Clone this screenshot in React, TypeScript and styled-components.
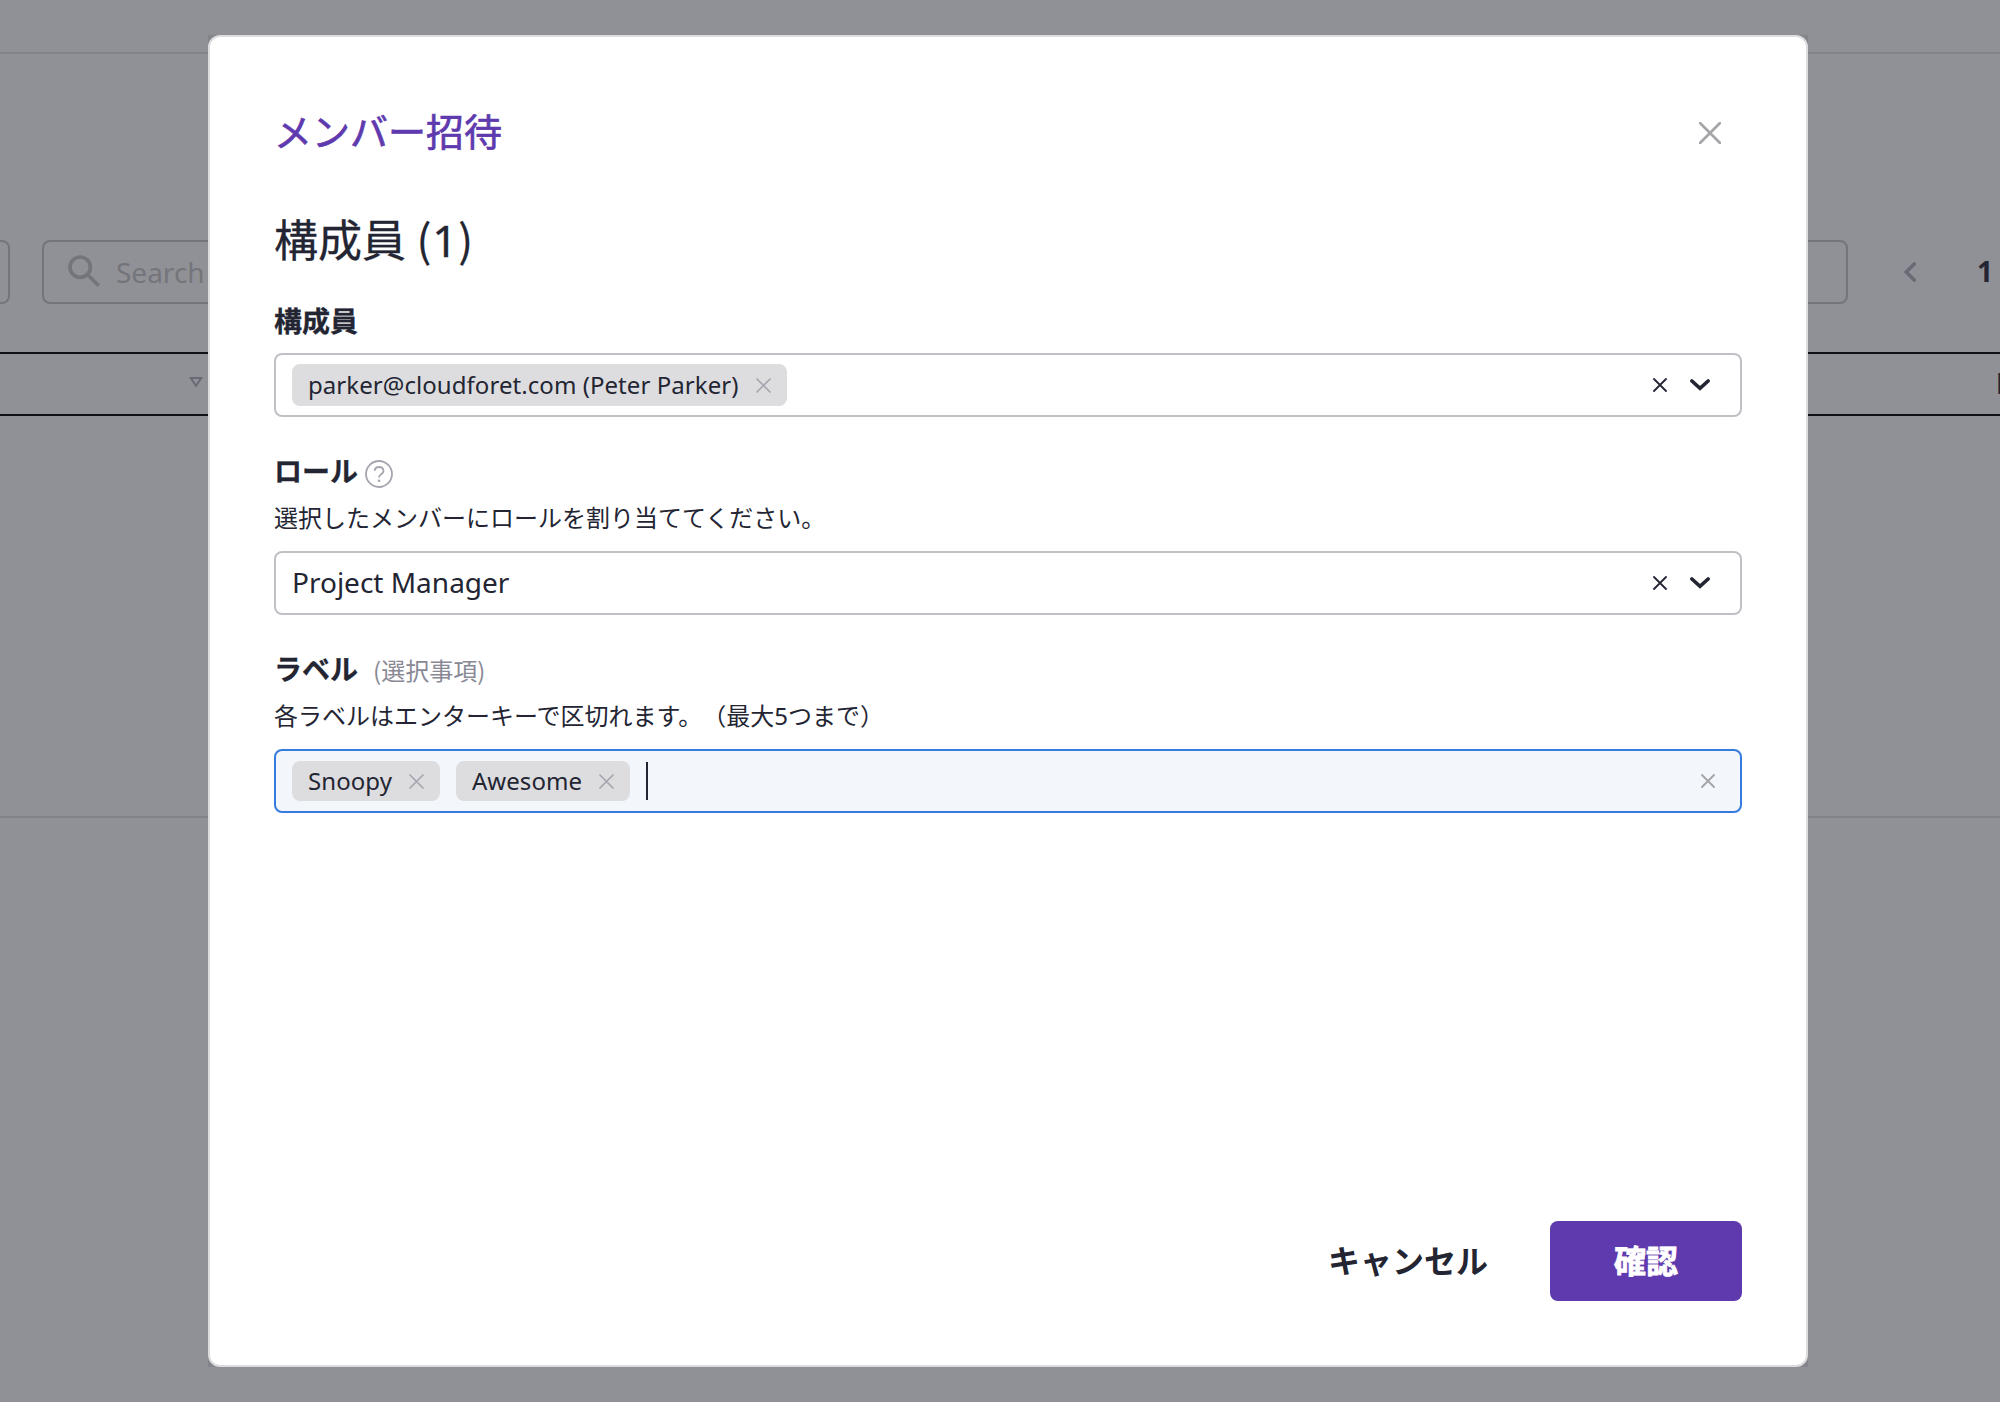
import React from 'react';
import styled, { createGlobalStyle } from 'styled-components';

const GlobalStyle = createGlobalStyle`
  *, *::before, *::after { box-sizing: border-box; }
  body {
    margin: 0;
    overflow: hidden;
    background: #909196;
    color: #232533;
    font-family: "Noto Sans", "Noto Sans CJK JP", sans-serif;
    text-spacing-trim: space-all;
  }
  button { font: inherit; color: inherit; border: 0; background: none; padding: 0; }
  svg { display: block; flex: none; }
`;

const Page = styled.div`
  width: 2000px;
  height: 1402px;
  display: flex;
  flex-direction: column;
  overflow: hidden;
`;

const TopBar = styled.header`
  height: 54px;
  flex: none;
  border-bottom: 2px solid #828388;
`;

const Panel = styled.section`
  height: 764px;
  flex: none;
  padding-top: 186px;
  border-bottom: 2px solid #828388;
`;

const Toolbar = styled.div`
  display: flex;
  align-items: center;
  height: 64px;
`;

const ToolBox = styled.div`
  width: 10px;
  height: 64px;
  border: 2px solid #74757b;
  border-left: 0;
  border-radius: 0 8px 8px 0;
`;

const SearchBox = styled.div`
  display: flex;
  align-items: center;
  width: 1806px;
  height: 64px;
  margin-left: 32px;
  padding: 0 0 1px 24px;
  gap: 15px;
  border: 2px solid #74757b;
  border-radius: 8px;
  color: #74757b;
  font-size: 28px;
`;

const PagePrev = styled.div`
  margin-left: 56px;
  color: #696a75;
`;

const PageNumber = styled.div`
  margin: 0 0 2px 61px;
  font-size: 28px;
  font-weight: 700;
`;

const TableHead = styled.div`
  display: flex;
  align-items: center;
  justify-content: space-between;
  height: 64px;
  margin-top: 48px;
  padding: 0 0 3px 189px;
  border-top: 2px solid #101118;
  border-bottom: 2px solid #101118;
  overflow: hidden;
`;

const NextColumn = styled.span`
  width: 4px;
  font-size: 28px;
  font-weight: 700;
  white-space: nowrap;
`;

const Backdrop = styled.div`
  position: fixed;
  inset: 0;
  display: flex;
  align-items: flex-start;
  justify-content: center;
  padding: 35px 0 0 16px;
`;

const DialogShade = styled.div`
  width: 1600px;
  height: 1332px;
  background: #84858b;
`;

const Dialog = styled.div`
  display: flex;
  flex-direction: column;
  height: 100%;
  padding: 62px 64px 64px;
  background: #fff;
  border: 2px solid #dddddf;
  border-radius: 12px;
`;

const Header = styled.div`
  display: flex;
  align-items: center;
  justify-content: space-between;
  height: 68px;
  padding-right: 21px;
`;

const Title = styled.h1`
  margin: 0 0 4px;
  font-size: 38px;
  font-weight: 400;
  line-height: 64px;
  color: #5f3aae;
  -webkit-text-stroke: 0.7px #5f3aae;
`;

const Heading = styled.h2`
  margin: 39px 0 32px;
  font-size: 44px;
  font-weight: 400;
  line-height: 64px;
  height: 64px;
  -webkit-text-stroke: 0.3px #232533;
`;

const Paren = styled.span<{ $spacing?: number }>`
  font-family: "Noto Sans CJK JP", sans-serif;
  letter-spacing: ${(p) => p.$spacing ?? 0}px;
`;

const Count = styled.span`
  letter-spacing: 1px;
`;

const Field = styled.div`
  display: flex;
  flex-direction: column;
  margin-bottom: 35px;
`;

const LabelRow = styled.div`
  display: flex;
  align-items: center;
  height: 40px;
  line-height: 39px;
`;

const Label = styled.label`
  height: 40px;
  font-size: 28px;
  font-weight: 700;
  -webkit-text-stroke: 0.3px #232533;
`;

const Optional = styled.span`
  height: 40px;
  margin-left: 15px;
  font-size: 24px;
  color: #898995;
`;

const HelpMark = styled.span`
  margin: 4px 0 0 7px;
  color: #a5a5af;
`;

const Hint = styled.p`
  margin: 11px 0 7px;
  height: 30px;
  font-size: 24px;
  line-height: 30px;
`;

const Control = styled.div<{ $active?: boolean }>`
  display: flex;
  align-items: center;
  height: 64px;
  margin-top: 11px;
  padding: 0 ${(p) => (p.$active ? 25 : 30)}px 0 16px;
  border: 2px solid ${(p) => (p.$active ? '#357be0' : '#c0c0c6')};
  border-radius: 8px;
  background: ${(p) => (p.$active ? '#f3f7fc' : '#fff')};
`;

const Tag = styled.span<{ $h: number }>`
  display: flex;
  align-items: center;
  gap: 17px;
  height: ${(p) => p.$h}px;
  margin-right: 16px;
  padding: 0 16px 1px;
  border-radius: 8px;
  background: #dddddf;
  font-size: 24px;
  letter-spacing: 0.06px;
  white-space: nowrap;
  svg { color: #a5a5af; margin-top: 2px; }
`;

const Value = styled.span`
  margin-bottom: 2px;
  font-size: 28px;
`;

const Caret = styled.span`
  width: 2px;
  height: 38px;
  background: #232533;
`;

const Actions = styled.div`
  display: flex;
  align-items: center;
  gap: 23px;
  margin-left: auto;
`;

const Footer = styled.div`
  display: flex;
  justify-content: flex-end;
  margin-top: auto;
`;

const Button = styled.button<{ $primary?: boolean }>`
  height: 80px;
  padding: 0 ${(p) => (p.$primary ? 64 : 62)}px;
  border-radius: 8px;
  font-size: 32px;
  font-weight: 700;
  line-height: 80px;
  color: ${(p) => (p.$primary ? '#fff' : '#232533')};
  background: ${(p) => (p.$primary ? '#5f3aae' : 'transparent')};
  -webkit-text-stroke: ${(p) => (p.$primary ? '0.8px #fff' : '0')};
`;

const Cross = ({ size, weight }: { size: number; weight: number }) => (
  <svg width={size} height={size} viewBox={`0 0 ${size} ${size}`} fill="none" stroke="currentColor" strokeWidth={weight} strokeLinecap="round">
    <path d={`M1 1L${size - 1} ${size - 1}M${size - 1} 1L1 ${size - 1}`} />
  </svg>
);

const ChevronDown = () => (
  <svg width="20" height="12" viewBox="0 0 20 12" fill="none" stroke="currentColor" strokeWidth="3.6" strokeLinecap="round">
    <path d="M1.9 2L10 9.4L18.1 2" />
  </svg>
);

const ChevronLeft = () => (
  <svg width="12" height="20" viewBox="0 0 12 20" fill="none" stroke="currentColor" strokeWidth="3.6" strokeLinecap="round">
    <path d="M10.2 1.9L2.2 10L10.2 18.1" />
  </svg>
);

const SearchIcon = () => (
  <svg width="33" height="33" viewBox="0 0 33 33" fill="none" stroke="currentColor" strokeWidth="3.7">
    <circle cx="12.2" cy="12.2" r="10.2" />
    <path d="M20.2 20.2L30.7 30.7" />
  </svg>
);

const SortIcon = () => (
  <svg width="14" height="11" viewBox="0 0 14 11" fill="none" stroke="#696a75" strokeWidth="2">
    <path d="M1.7 1H12.3L7 8.8Z" />
  </svg>
);

const HelpIcon = () => (
  <svg width="28" height="28" viewBox="0 0 28 28" fill="none" stroke="currentColor" strokeWidth="1.8">
    <circle cx="14" cy="14" r="13" />
    <path d="M9.7 10.8C9.9 8.3 11.7 7 14 7C16.6 7 18.5 8.6 18.5 10.9C18.5 14 14 14.1 14 17.4" />
    <circle cx="14" cy="20.8" r="1.3" fill="currentColor" stroke="none" />
  </svg>
);

const SelectActions = () => (
  <Actions>
    <Cross size={14} weight={1.8} />
    <ChevronDown />
  </Actions>
);

const RemovableTag = ({ text, height }: { text: string; height: number }) => (
  <Tag $h={height}>
    {text}
    <Cross size={15} weight={1.7} />
  </Tag>
);

const ClearIcon = styled.span`
  margin-left: auto;
  color: #a5a5a9;
`;

const CloseButton = styled.button`
  color: #a5a5a9;
`;

export default function App() {
  return (
    <>
      <GlobalStyle />
      <Page>
        <TopBar />
        <Panel>
          <Toolbar>
            <ToolBox />
            <SearchBox>
              <SearchIcon />
              Search
            </SearchBox>
            <PagePrev>
              <ChevronLeft />
            </PagePrev>
            <PageNumber>1</PageNumber>
          </Toolbar>
          <TableHead>
            <SortIcon />
            <NextColumn>L</NextColumn>
          </TableHead>
        </Panel>
      </Page>
      <Backdrop>
        <DialogShade>
          <Dialog role="dialog">
            <Header>
              <Title>メンバー招待</Title>
              <CloseButton aria-label="close">
                <Cross size={22} weight={2.7} />
              </CloseButton>
            </Header>
            <Heading>
              構成員<Paren $spacing={0.7}> (</Paren><Count>1</Count><Paren>)</Paren>
            </Heading>
            <Field>
              <LabelRow>
                <Label>構成員</Label>
              </LabelRow>
              <Control>
                <RemovableTag text="parker@cloudforet.com (Peter Parker)" height={42} />
                <SelectActions />
              </Control>
            </Field>
            <Field>
              <LabelRow>
                <Label>ロール</Label>
                <HelpMark>
                  <HelpIcon />
                </HelpMark>
              </LabelRow>
              <Hint>選択したメンバーにロールを割り当ててください。</Hint>
              <Control>
                <Value>Project Manager</Value>
                <SelectActions />
              </Control>
            </Field>
            <Field>
              <LabelRow>
                <Label>ラベル</Label>
                <Optional>
                  <Paren>(</Paren>選択事項<Paren>)</Paren>
                </Optional>
              </LabelRow>
              <Hint>各ラベルはエンターキーで区切れます。（最大5つまで）</Hint>
              <Control $active>
                <RemovableTag text="Snoopy" height={40} />
                <RemovableTag text="Awesome" height={40} />
                <Caret />
                <ClearIcon>
                  <Cross size={14} weight={1.9} />
                </ClearIcon>
              </Control>
            </Field>
            <Footer>
              <Button>キャンセル</Button>
              <Button $primary>確認</Button>
            </Footer>
          </Dialog>
        </DialogShade>
      </Backdrop>
    </>
  );
}
